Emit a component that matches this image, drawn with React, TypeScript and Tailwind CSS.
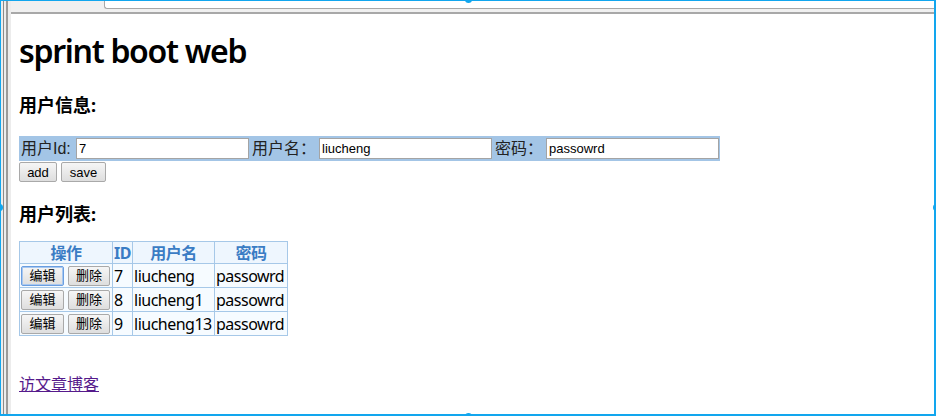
const sans = "font-['Noto_Sans','Noto_Sans_CJK_SC',sans-serif]";
const arial = "font-['Liberation_Sans','Noto_Sans_CJK_SC',sans-serif]";

const users = [
  { id: 7, name: "liucheng", pwd: "passowrd" },
  { id: 8, name: "liucheng1", pwd: "passowrd" },
  { id: 9, name: "liucheng13", pwd: "passowrd" },
];

const Btn = ({ children, focus = false, className = "" }: { children: React.ReactNode; focus?: boolean; className?: string }) => (
  <button
    className={`h-[20px] shrink-0 rounded-[2px] border ${focus ? "border-[#6a9ee0] shadow-[inset_0_0_0_1px_#a8c8f0]" : "border-[#a9a9a9]"} bg-gradient-to-b from-[#f6f6f6] to-[#dedede] text-[13px] leading-none text-black ${arial} ${className}`}
  >
    {children}
  </button>
);

const Field = ({ value }: { value: string }) => (
  <input
    readOnly
    value={value}
    className={`h-[21px] w-[173px] shrink-0 border border-[#a4a4a4] bg-white px-[2px] text-[13px] text-black outline-none ${arial}`}
  />
);

const Handle = ({ className }: { className: string }) => (
  <div className={`absolute h-[7px] w-[7px] rounded-full bg-[#12a6ee] ${className}`} />
);

export default function App() {
  return (
    <div className="relative h-[416px] w-[936px] overflow-hidden bg-white">
      <div className="flex h-full w-full">
        {/* left gutter */}
        <div className="flex h-full w-[11px] shrink-0 bg-[#ececec]">
          <div className="ml-[3px] h-full w-px bg-[#8a8a8a]" />
          <div className="ml-[2px] h-full w-[2px] bg-[#9a9a9a]" />
        </div>
        <div className="flex min-w-0 flex-1 flex-col">
          {/* top bar */}
          <div className="h-[14px] shrink-0 border-b-2 border-[#a8a8a8] bg-[#f0f0f0] pl-[93px]">
            <div className="h-[9px] rounded-bl-[3px] border-b border-l border-[#a8a8a8] bg-white" />
          </div>
          {/* page */}
          <div className={`px-[8px] text-black ${sans}`}>
            <h1 className="mt-[15px] text-[32px] font-semibold leading-[44px] tracking-[-1.3px]">sprint boot web</h1>
            <h3 className="mt-[19px] text-[18px] font-bold leading-[26px]">用户信息:</h3>
            <div className="mt-[18px] flex h-[25px] w-[701px] items-center whitespace-nowrap bg-[#a3c5e6] pl-[2px] text-[16px] text-[#222]">
              <span className={`w-[55px] shrink-0 ${arial}`}>用户Id:</span>
              <Field value="7" />
              <span className={`ml-[3px] w-[67px] shrink-0 ${arial}`}>用户名：</span>
              <Field value="liucheng" />
              <span className={`ml-[3px] w-[51px] shrink-0 ${arial}`}>密码：</span>
              <Field value="passowrd" />
            </div>
            <div className="mt-px flex gap-[4px]">
              <Btn className="w-[38px]">add</Btn>
              <Btn className="w-[45px]">save</Btn>
            </div>
            <h3 className="mt-[19px] text-[18px] font-bold leading-[26px]">用户列表:</h3>
            <table className="mt-[14px] border-collapse text-[16px] tracking-[-0.5px]">
              <thead>
                <tr className="h-[22px] bg-[#eef6fe] text-[#3a7cc4]">
                  <th className="w-[93px] border border-[#a6c8e8] p-0 font-bold leading-[20px]">操作</th>
                  <th className="w-[20px] border border-[#a6c8e8] p-0 font-bold leading-[20px]">ID</th>
                  <th className="w-[82px] border border-[#a6c8e8] p-0 font-bold leading-[20px]">用户名</th>
                  <th className="w-[73px] border border-[#a6c8e8] p-0 font-bold leading-[20px]">密码</th>
                </tr>
              </thead>
              <tbody>
                {users.map((u, i) => (
                  <tr key={u.id} className="h-[24px] bg-[#f6fbff]">
                    <td className="border border-[#a6c8e8] px-px py-0">
                      <div className="flex gap-[4px] tracking-normal">
                        <Btn focus={i === 0} className="w-[43px]">编辑</Btn>
                        <Btn className="w-[42px]">删除</Btn>
                      </div>
                    </td>
                    <td className="border border-[#a6c8e8] px-px py-0 leading-[22px]">{u.id}</td>
                    <td className="border border-[#a6c8e8] px-px py-0 leading-[22px]">{u.name}</td>
                    <td className="border border-[#a6c8e8] px-px py-0 leading-[22px]">{u.pwd}</td>
                  </tr>
                ))}
              </tbody>
            </table>
            <div className="mt-[36px]">
              <a href="#" className="text-[16px] leading-[20px] text-[#551a8b] underline font-['Noto_Sans_CJK_SC',sans-serif]">访文章博客</a>
            </div>
          </div>
        </div>
      </div>
      {/* selection frame */}
      <div className="pointer-events-none absolute inset-0 border-t border-l border-r-2 border-b-2 border-[#12a6ee]" />
      <Handle className="left-[465px] top-[-4px]" />
      <Handle className="left-[465px] bottom-[-4px]" />
      <Handle className="right-[-4px] top-[204px]" />
      <Handle className="left-[-4px] top-[204px]" />
    </div>
  );
}
